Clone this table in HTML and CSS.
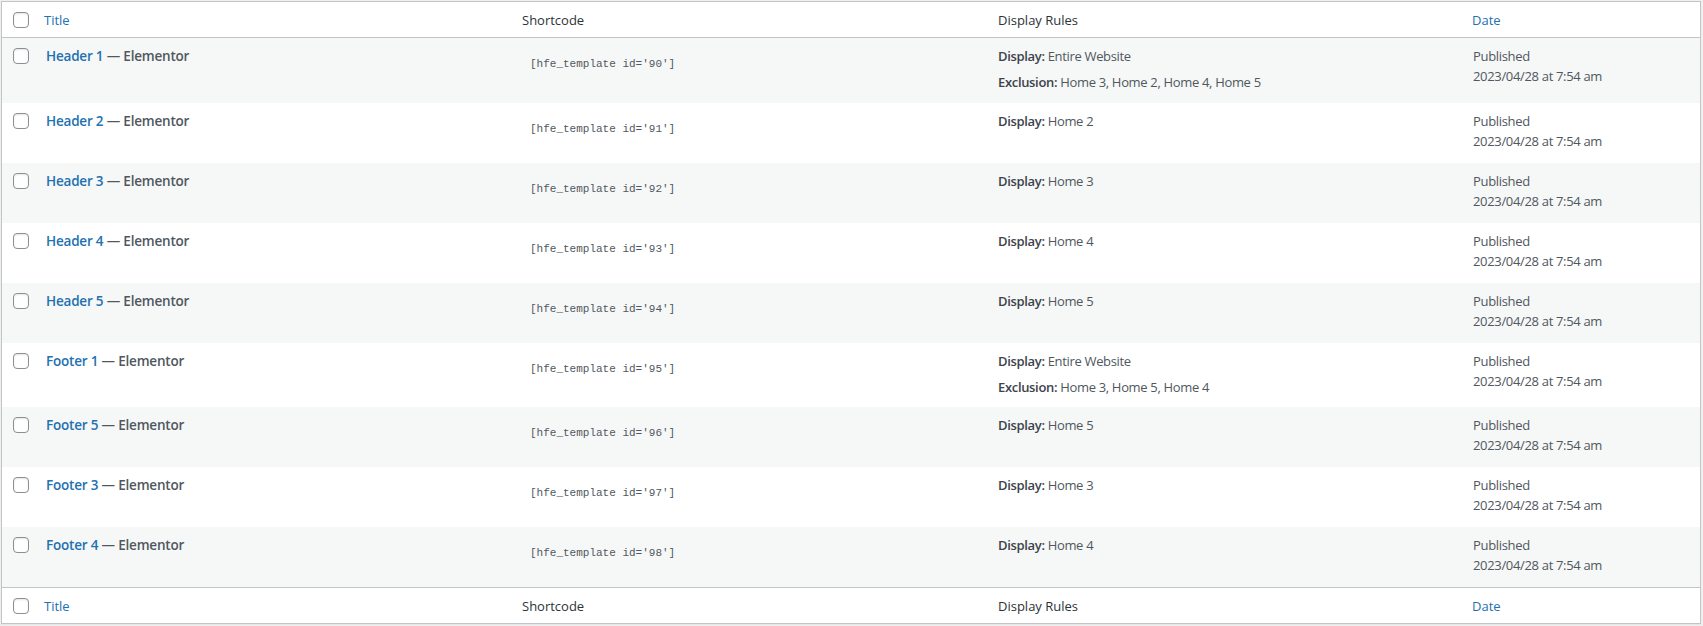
FILE: index.html
```html
<!DOCTYPE html>
<html lang="en">
<head>
<meta charset="utf-8">
<title>Elementor Header &amp; Footer templates</title>
<link rel="stylesheet" href="styles.css">
</head>
<body>
<table class="list-table">
  <colgroup>
    <col class="col-cb">
    <col class="col-title">
    <col class="col-code">
    <col class="col-rules">
    <col class="col-date">
  </colgroup>
  <thead>
    <tr>
      <td class="cb-head"><span class="checkbox"></span></td>
      <th class="head-title"><a href="#">Title</a></th>
      <th class="head-plain">Shortcode</th>
      <th class="head-plain">Display Rules</th>
      <th class="head-date"><a href="#">Date</a></th>
    </tr>
  </thead>
  <tbody>
    <tr class="row row-tall row-alt">
      <td class="cb"><span class="checkbox"></span></td>
      <td class="title"><strong><a class="row-title" href="#">Header 1</a> — <span class="post-state">Elementor</span></strong></td>
      <td class="code"><code>[hfe_template id='90']</code></td>
      <td class="rules"><div class="rule"><b>Display:</b> Entire Website</div><div class="rule rule-gap"><b>Exclusion:</b> Home 3, Home 2, Home 4, Home 5</div></td>
      <td class="date">Published<br>2023/04/28 at 7:54 am</td>
    </tr>
    <tr class="row">
      <td class="cb"><span class="checkbox"></span></td>
      <td class="title"><strong><a class="row-title" href="#">Header 2</a> — <span class="post-state">Elementor</span></strong></td>
      <td class="code"><code>[hfe_template id='91']</code></td>
      <td class="rules"><div class="rule"><b>Display:</b> Home 2</div></td>
      <td class="date">Published<br>2023/04/28 at 7:54 am</td>
    </tr>
    <tr class="row row-alt">
      <td class="cb"><span class="checkbox"></span></td>
      <td class="title"><strong><a class="row-title" href="#">Header 3</a> — <span class="post-state">Elementor</span></strong></td>
      <td class="code"><code>[hfe_template id='92']</code></td>
      <td class="rules"><div class="rule"><b>Display:</b> Home 3</div></td>
      <td class="date">Published<br>2023/04/28 at 7:54 am</td>
    </tr>
    <tr class="row">
      <td class="cb"><span class="checkbox"></span></td>
      <td class="title"><strong><a class="row-title" href="#">Header 4</a> — <span class="post-state">Elementor</span></strong></td>
      <td class="code"><code>[hfe_template id='93']</code></td>
      <td class="rules"><div class="rule"><b>Display:</b> Home 4</div></td>
      <td class="date">Published<br>2023/04/28 at 7:54 am</td>
    </tr>
    <tr class="row row-alt">
      <td class="cb"><span class="checkbox"></span></td>
      <td class="title"><strong><a class="row-title" href="#">Header 5</a> — <span class="post-state">Elementor</span></strong></td>
      <td class="code"><code>[hfe_template id='94']</code></td>
      <td class="rules"><div class="rule"><b>Display:</b> Home 5</div></td>
      <td class="date">Published<br>2023/04/28 at 7:54 am</td>
    </tr>
    <tr class="row row-tall">
      <td class="cb"><span class="checkbox"></span></td>
      <td class="title"><strong><a class="row-title" href="#">Footer 1</a> — <span class="post-state">Elementor</span></strong></td>
      <td class="code"><code>[hfe_template id='95']</code></td>
      <td class="rules"><div class="rule"><b>Display:</b> Entire Website</div><div class="rule rule-gap"><b>Exclusion:</b> Home 3, Home 5, Home 4</div></td>
      <td class="date">Published<br>2023/04/28 at 7:54 am</td>
    </tr>
    <tr class="row row-alt">
      <td class="cb"><span class="checkbox"></span></td>
      <td class="title"><strong><a class="row-title" href="#">Footer 5</a> — <span class="post-state">Elementor</span></strong></td>
      <td class="code"><code>[hfe_template id='96']</code></td>
      <td class="rules"><div class="rule"><b>Display:</b> Home 5</div></td>
      <td class="date">Published<br>2023/04/28 at 7:54 am</td>
    </tr>
    <tr class="row">
      <td class="cb"><span class="checkbox"></span></td>
      <td class="title"><strong><a class="row-title" href="#">Footer 3</a> — <span class="post-state">Elementor</span></strong></td>
      <td class="code"><code>[hfe_template id='97']</code></td>
      <td class="rules"><div class="rule"><b>Display:</b> Home 3</div></td>
      <td class="date">Published<br>2023/04/28 at 7:54 am</td>
    </tr>
    <tr class="row row-alt">
      <td class="cb"><span class="checkbox"></span></td>
      <td class="title"><strong><a class="row-title" href="#">Footer 4</a> — <span class="post-state">Elementor</span></strong></td>
      <td class="code"><code>[hfe_template id='98']</code></td>
      <td class="rules"><div class="rule"><b>Display:</b> Home 4</div></td>
      <td class="date">Published<br>2023/04/28 at 7:54 am</td>
    </tr>
  </tbody>
  <tfoot>
    <tr>
      <td class="cb-head"><span class="checkbox"></span></td>
      <th class="head-title"><a href="#">Title</a></th>
      <th class="head-plain">Shortcode</th>
      <th class="head-plain">Display Rules</th>
      <th class="head-date"><a href="#">Date</a></th>
    </tr>
  </tfoot>
</table>
</body>
</html>
```

FILE: styles.css
```css
html, body {
  margin: 0;
  padding: 0;
}

body {
  background: #f0f0f1;
  padding: 1px 2px 3px 1px;
  font-family: "Open Sans", "Noto Sans", "Liberation Sans", sans-serif;
  font-size: 13px;
  color: #50575e;
}

a {
  color: #2271b1;
  text-decoration: none;
}

.list-table {
  width: 1700px;
  table-layout: fixed;
  border-collapse: separate;
  border-spacing: 0;
  border: 1px solid #c3c4c7;
  background: #fff;
  box-shadow: 0 1px 1px rgba(0, 0, 0, 0.04);
}

.col-cb { width: 32px; }
.col-title { width: 478px; }
.col-code { width: 476px; }
.col-rules { width: 474px; }
.col-date { width: 238px; }

/* header / footer */
thead th,
thead td,
tfoot th,
tfoot td {
  height: 35px;
  padding: 0 10px;
  text-align: left;
  font-weight: 400;
  font-size: 13px;
  line-height: 20px;
  color: #2c3338;
  vertical-align: middle;
}

thead th,
thead td {
  border-bottom: 1px solid #c3c4c7;
}

tfoot th,
tfoot td {
  border-top: 1px solid #c3c4c7;
}

.cb-head {
  padding: 0;
}

.head-title a,
.head-date a {
  color: #2271b1;
}

.checkbox {
  display: block;
  box-sizing: border-box;
  width: 16px;
  height: 16px;
  margin-left: 11px;
  border: 1px solid #8c8f94;
  border-radius: 4px;
  background: #fff;
  box-shadow: inset 0 1px 2px rgba(0, 0, 0, 0.1);
}

.cb-head .checkbox {
  margin-top: 1px;
}

/* body rows */
.row {
  height: 60px;
}

.row-tall {
  height: 64.5px;
}

.row-alt {
  background: #f6f7f7;
}

.row td {
  padding: 8px 10px 0;
  vertical-align: top;
  line-height: 20px;
  font-size: 13px;
  letter-spacing: -0.33px;
  color: #50575e;
}

.row td.cb {
  padding: 10px 0 0;
}

.row td.title {
  padding-left: 12px;
  font-size: 13.5px;
  letter-spacing: -0.2px;
  line-height: 21px;
}

.title strong {
  font-weight: 600;
  color: #50575e;
}

.row-title {
  color: #2271b1;
}

.post-state {
  color: #50575e;
}

.row td.code {
  padding-top: 14px;
  padding-left: 18px;
  letter-spacing: 0;
}

.code code {
  font-family: "Liberation Mono", "DejaVu Sans Mono", monospace;
  font-size: 11px;
  line-height: 20px;
  color: #50575e;
}

.rule b {
  font-weight: 600;
  color: #3c434a;
}

.rule-gap {
  margin-top: 6px;
}

.row td.date {
  padding-left: 11px;
}
```
